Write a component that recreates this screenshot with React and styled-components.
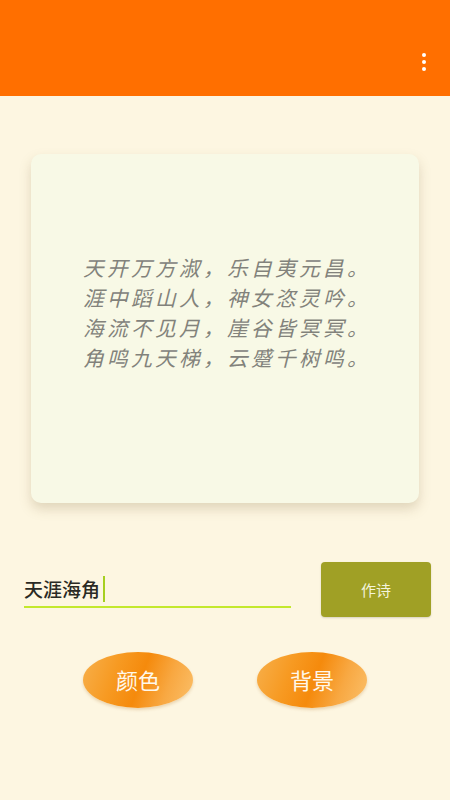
import React from "react";
import styled, { createGlobalStyle } from "styled-components";

const GlobalStyle = createGlobalStyle`
  html, body {
    margin: 0;
    padding: 0;
    background: #fdf6e1;
    font-family: "Noto Sans CJK SC", "Noto Sans", sans-serif;
  }
`;

const Page = styled.div`
  width: 450px;
  min-height: 800px;
  background: #fdf6e1;
  display: flex;
  flex-direction: column;
`;

const Header = styled.div`
  height: 96px;
  background: #ff6f00;
  display: flex;
  align-items: center;
  justify-content: flex-end;
  padding: 28px 20px 0 0;
  box-sizing: border-box;
`;

const MenuButton = styled.div`
  display: flex;
  flex-direction: column;
  gap: 3px;
  padding: 4px;
`;

const Dot = styled.span`
  width: 4px;
  height: 4px;
  border-radius: 50%;
  background: #fff;
`;

const Card = styled.div`
  margin: 58px 31px 0;
  height: 349px;
  background: #f8f9e6;
  border-radius: 10px;
  box-shadow: 0 6px 12px rgba(150, 130, 90, 0.28);
  display: flex;
  align-items: center;
  justify-content: center;
  padding-bottom: 34px;
  box-sizing: border-box;
`;

const Poem = styled.div`
  font-size: 20.7px;
  line-height: 30px;
  font-style: italic;
  color: #82827b;
  letter-spacing: 3.3px;
  padding-left: 4px;
`;

const InputRow = styled.div`
  display: flex;
  align-items: center;
  margin: 59px 19px 0 24px;
  gap: 30px;
`;

const Field = styled.div`
  flex: 0 0 267px;
  height: 36px;
  border-bottom: 2.5px solid #c3e82d;
  display: flex;
  align-items: center;
  box-sizing: border-box;
`;

const FieldText = styled.span`
  font-size: 19px;
  font-weight: 500;
  color: #2a2a24;
`;

const Caret = styled.span`
  width: 2px;
  height: 26px;
  background: #a6cf20;
  margin-left: 3px;
`;

const SubmitButton = styled.button`
  width: 110px;
  height: 55px;
  border: none;
  border-radius: 4px;
  background: #a0a025;
  color: #f4f4dc;
  font-family: inherit;
  font-size: 15px;
  box-shadow: 0 1px 2px rgba(0, 0, 0, 0.15);
`;

const OvalRow = styled.div`
  display: flex;
  justify-content: center;
  gap: 64px;
  margin-top: 35px;
`;

const Oval = styled.button`
  width: 110px;
  height: 56px;
  border: none;
  border-radius: 50%;
  background: linear-gradient(
    110deg,
    #f7b04c 0%,
    #f79a22 30%,
    #f58a0c 52%,
    #f8a842 75%,
    #fbc06a 100%
  );
  color: #fff8ea;
  font-family: inherit;
  font-size: 22px;
  padding-bottom: 3px;
  box-shadow: 0 2px 3px rgba(180, 120, 40, 0.25);
`;

const lines = [
  "天开万方淑，乐自夷元昌。",
  "涯中蹈山人，神女恣灵吟。",
  "海流不见月，崖谷皆冥冥。",
  "角鸣九天梯，云蹙千树鸣。",
];

const App = () => {
  return (
    <Page>
      <GlobalStyle />
      <Header>
        <MenuButton>
          <Dot />
          <Dot />
          <Dot />
        </MenuButton>
      </Header>
      <Card>
        <Poem>
          {lines.map((line) => (
            <div key={line}>{line}</div>
          ))}
        </Poem>
      </Card>
      <InputRow>
        <Field>
          <FieldText>天涯海角</FieldText>
          <Caret />
        </Field>
        <SubmitButton>作诗</SubmitButton>
      </InputRow>
      <OvalRow>
        <Oval>颜色</Oval>
        <Oval>背景</Oval>
      </OvalRow>
    </Page>
  );
};

export default App;
